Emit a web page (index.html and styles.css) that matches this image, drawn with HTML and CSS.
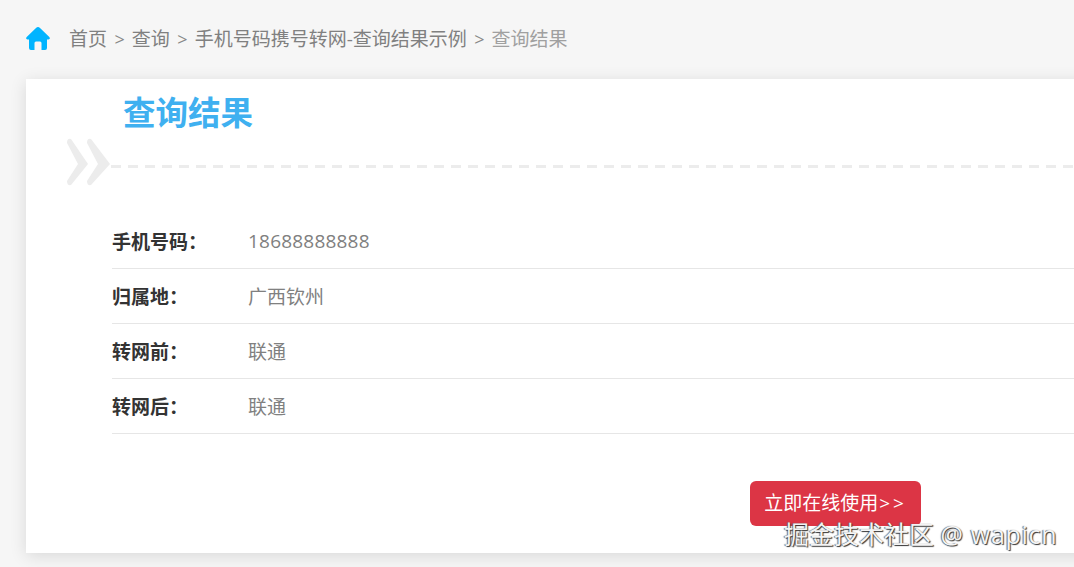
FILE: index.html
```html
<!doctype html>
<html>
    <head>
        <meta charset="utf-8">
        <link rel="stylesheet" href="styles.css">
    </head>
    <body>
        <nav class="crumbs">
            <svg class="home" viewBox="0 0 24 24" width="24" height="24">
                <path d="M12 1 Q13 1 14 2 L23.300 11 Q24.800 13 22.500 13.500 L21 13.500 L21 22 Q21 24 19 24 L15.500 24 L15.500 17 Q15.500 15.500 14 15.500 L10 15.500 Q8.500 15.500 8.500 17 L8.500 24 L5 24 Q3 24 3 22 L3 13.500 L1.500 13.500 Q-0.800 13 0.700 11 L10 2 Q11 1 12 1 Z" fill="#00b4ff"/>
            </svg>
            <a class="crumb">首页</a>
            <span class="sep">&gt;</span>
            <a class="crumb">查询</a>
            <span class="sep">&gt;</span>
            <a class="crumb">手机号码携号转网-查询结果示例</a>
            <span class="sep">&gt;</span>
            <span class="crumb current">查询结果</span>
        </nav>
        <main class="card">
            <h1 class="title">查询结果</h1>
            <div class="divider">
                <svg class="arrows" viewBox="0 0 44 48" width="44" height="48">
                    <path d="M0 5 Q0 0 4 1 L21 26 L4 47 Q0 48 0 43 L11 26 Z" fill="#ececec"/>
                    <path d="M20 5 Q20 0 24 1 L43 26 L24 47 Q20 48 20 43 L31 26 Z" fill="#ececec"/>
                </svg>
                <div class="dash"></div>
            </div>
            <dl class="info">
                <div class="row">
                    <dt>手机号码：</dt>
                    <dd class="num">18688888888</dd>
                </div>
                <div class="row">
                    <dt>归属地：</dt>
                    <dd>广西钦州</dd>
                </div>
                <div class="row">
                    <dt>转网前：</dt>
                    <dd>联通</dd>
                </div>
                <div class="row">
                    <dt>转网后：</dt>
                    <dd>联通</dd>
                </div>
            </dl>
            <div class="actions">
                <button class="use-btn">立即在线使用<span class="more">&gt;&gt;</span></button>
            </div>
        </main>
        <div class="watermark">掘金技术社区 <span class="handle">@ wapicn</span></div>
    </body>
</html>
```

FILE: styles.css
```css
* {
    margin: 0;
    padding: 0;
    box-sizing: border-box;
}
html,
body {
    height: 100%;
    overflow: hidden;
}
body {
    background: #f6f6f6;
    font-family: "Open Sans", "Noto Sans CJK SC", sans-serif;
    color: #888;
    position: relative;
}
.crumbs {
    height: 79px;
    padding: 26px 0 0 26px;
    display: flex;
    align-items: flex-start;
    font-size: 19px;
    line-height: 26px;
}
.home {
    margin-right: 19px;
    flex: none;
}
.crumb {
    color: #808080;
}
.current {
    color: #a0a0a0;
}
.sep {
    color: #888;
    font-size: 18px;
    margin: 0 7px 0 7.5px;
}
.card {
    margin-left: 26px;
    width: 1100px;
    height: 474px;
    background: #fff;
    box-shadow: 0 3px 16px rgba(0, 0, 0, 0.12);
    padding-top: 14px;
}
.title {
    margin-left: 97px;
    font-size: 32.5px;
    line-height: 40px;
    font-weight: 700;
    color: #3fb0f0;
}
.divider {
    display: flex;
    align-items: flex-start;
    margin: 5px 0 0 41px;
}
.arrows {
    flex: none;
}
.dash {
    flex: 1;
    height: 3px;
    margin-top: 27px;
    background: repeating-linear-gradient(to right, #ececec 0, #ececec 10px, transparent 10px, transparent 17px);
}
.info {
    margin: 28px 0 0 86px;
    font-size: 19px;
}
.row {
    display: flex;
    align-items: center;
    height: 55px;
    padding-bottom: 1px;
    border-bottom: 1px solid #e6e6e6;
}
.row dt {
    width: 136px;
    font-weight: 700;
    color: #333;
}
.row dd {
    color: #808080;
}
.row .num {
    letter-spacing: 0.2px;
}
.actions {
    margin: 47px 0 0 724px;
}
.use-btn {
    display: block;
    width: 171px;
    height: 45px;
    padding-bottom: 3px;
    background: #dc3545;
    border: none;
    border-radius: 6px;
    color: #fff;
    font-family: inherit;
    font-size: 19px;
}
.more {
    letter-spacing: 3px;
    margin-left: 1px;
}
.watermark {
    position: absolute;
    left: 784px;
    top: 517px;
    font-size: 25px;
    line-height: 34px;
    white-space: nowrap;
    color: #f4f4f4;
    text-shadow: 1px 1px 1px #333, -1px 0 1px #666;
}
.handle {
    letter-spacing: 0.7px;
}
```
